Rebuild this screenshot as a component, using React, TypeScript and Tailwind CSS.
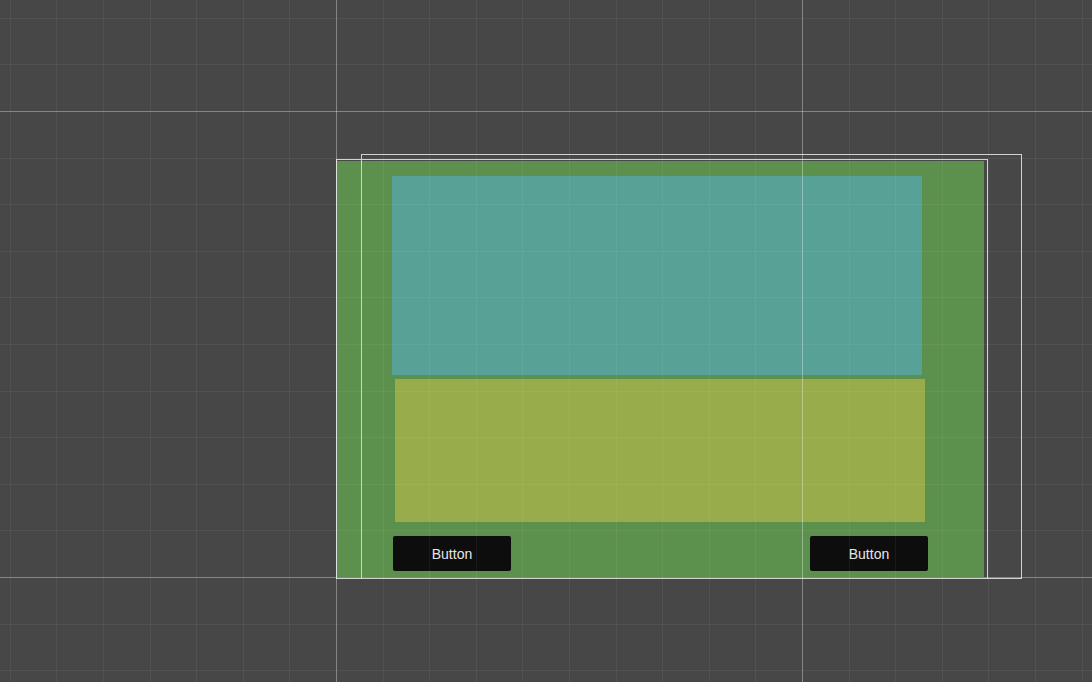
import React from 'react'

const STEP = 46.6
const ORIGIN_X = 336
const ORIGIN_Y = 111

function gridLines(origin: number, size: number) {
  const lines: { pos: number; major: boolean }[] = []
  const start = Math.ceil(-origin / STEP)
  const end = Math.floor((size - origin) / STEP)
  for (let k = start; k <= end; k++) {
    lines.push({ pos: Math.round(origin + k * STEP) + 0.5, major: k % 10 === 0 })
  }
  return lines
}

function Grid() {
  const xs = gridLines(ORIGIN_X, 1092)
  const ys = gridLines(ORIGIN_Y, 682)
  return (
    <svg
      className="pointer-events-none absolute inset-0"
      width={1092}
      height={682}
      viewBox="0 0 1092 682"
    >
      {xs.map((l) => (
        <line
          key={'x' + l.pos}
          x1={l.pos}
          x2={l.pos}
          y1={0}
          y2={682}
          stroke="#ffffff"
          strokeOpacity={l.major ? 0.34 : 0.055}
          strokeWidth={1}
        />
      ))}
      {ys.map((l) => (
        <line
          key={'y' + l.pos}
          y1={l.pos}
          y2={l.pos}
          x1={0}
          x2={1092}
          stroke="#ffffff"
          strokeOpacity={l.major ? 0.34 : 0.055}
          strokeWidth={1}
        />
      ))}
    </svg>
  )
}

function SceneButton({ label }: { label: string }) {
  return (
    <button className="flex h-[35px] w-[118px] items-center justify-center rounded-[2px] bg-[#0d0d0d] text-[14px] leading-none text-[#e6e6e6] [font-family:'Liberation_Sans',Arial,sans-serif]">
      {label}
    </button>
  )
}

export default function App() {
  return (
    <div className="relative h-[682px] w-[1092px] overflow-hidden bg-[#474747]">
      {/* canvas panel */}
      <div className="absolute left-[337px] top-[161px] flex h-[416px] w-[647px] flex-col bg-[#5b914d] pt-[15px]">
        <div className="ml-[55px] h-[199px] w-[530px] bg-[#57a196]" />
        <div className="ml-[58px] mt-[4px] h-[143px] w-[530px] bg-[#98ac4b]" />
        <div className="mt-[14px] flex justify-between px-[56px]">
          <SceneButton label="Button" />
          <SceneButton label="Button" />
        </div>
      </div>

      {/* rect transform outlines */}
      <div className="pointer-events-none absolute left-[336px] top-[159px] h-[420px] w-[652px] border border-[#d2d2d2]" />
      <div className="pointer-events-none absolute left-[361px] top-[154px] h-[425px] w-[661px] border border-[#d2d2d2]" />

      <Grid />
    </div>
  )
}
